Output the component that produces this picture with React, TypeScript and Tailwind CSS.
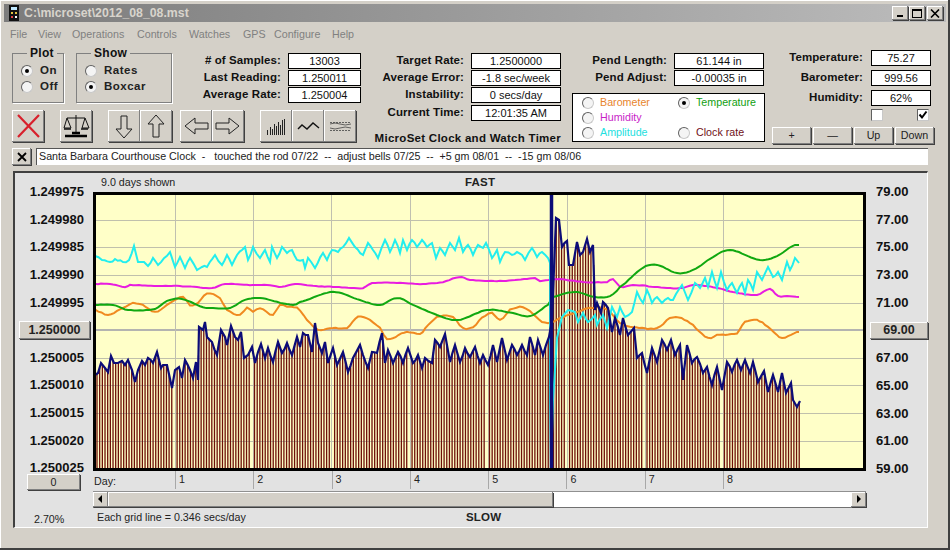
import React from "react";

const raised = "bg-[#d4d0c8] shadow-[inset_-1px_-1px_#808080,inset_1px_1px_#ffffff,1px_1px_#404040]";
const field = "bg-white border border-black text-center text-[11px] leading-[14px] text-[#111]";
const label = "font-bold text-[11.5px] tracking-[0.1px] text-[#111] leading-[15px]";
const plain = "text-[10.7px] text-[#222]";

const navy = "95,375 98,373 101,363 105,368 108,372 111,356 114,363 118,363 122,361 125,365 128,360 132,370 135,382 138,370 142,361 145,365 148,358 153,363 157,352 161,368 163,365 167,365 172,388 175,370 179,367 182,378 185,360 190,370 193,378 196,362 198,380 199,327 203,330 205,322 207,337 212,342 217,355 221,330 225,337 227,345 231,326 235,337 238,340 241,332 244,358 248,355 252,347 255,363 258,352 261,344 265,358 268,348 273,362 278,342 282,353 287,343 292,355 297,337 300,347 303,333 308,335 312,352 315,323 318,343 322,353 325,342 328,363 333,348 337,365 343,352 348,372 353,358 360,345 363,355 368,368 372,352 377,353 382,333 385,363 388,350 393,363 398,352 403,363 408,348 413,363 418,355 422,368 425,358 432,363 435,340 440,347 445,334 450,362 455,345 460,362 465,348 470,357 475,347 480,363 483,355 488,365 493,345 497,362 502,338 507,360 512,345 517,355 522,345 527,355 530,337 535,355 538,340 543,355 549,337 552,320 556,218 559,220 562,247 567,241 569,265 573,265 577,242 580,255 583,252 587,239 590,252 593,245 595,310 597,303 601,313 603,302 608,308 612,332 615,318 620,335 623,318 628,335 634,328 637,358 642,353 647,373 652,348 657,362 662,340 667,350 671,340 675,355 680,345 683,380 687,345 692,363 697,357 703,373 707,367 712,385 717,367 722,390 727,362 732,372 737,360 741,370 745,360 750,373 753,362 758,382 764,371 768,392 773,375 778,392 782,373 786,393 791,383 793,400 797,407 800,401";
const cyan = "95,256 102,260 110,262 115,259 123,262 129,260 134,246 138,262 144,262 148,266 153,258 158,265 170,252 175,267 180,257 185,268 190,258 197,270 202,267 207,267 215,255 222,265 227,255 232,265 237,255 245,247 248,260 253,247 260,258 265,250 270,262 272,247 277,258 282,247 287,253 292,250 297,260 303,260 305,268 308,258 315,268 323,253 327,260 332,250 338,252 343,247 349,238 355,247 363,255 368,243 378,258 385,240 390,252 395,240 400,253 403,240 407,250 412,240 417,247 422,240 427,247 432,243 436,258 440,248 445,255 450,243 455,250 459,238 463,252 468,245 473,255 478,245 483,248 486,243 492,258 497,250 500,262 505,252 512,255 517,252 522,255 525,260 532,248 537,257 542,252 548,258 550,263 550,400 551,469 553,400 557,338 562,317 568,310 575,312 578,322 583,313 588,322 595,315 597,325 603,315 607,328 612,307 617,317 620,307 625,317 632,312 637,292 643,303 647,290 652,303 657,297 662,303 668,298 673,300 682,285 688,300 695,283 700,288 705,278 708,287 712,272 717,288 721,272 727,290 732,283 737,293 742,283 745,293 748,280 753,290 757,272 762,280 768,267 773,277 778,272 782,280 787,262 790,270 795,258 799,263";
const magenta = "95,284 110,284 125,287 130,285 157,286 177,286 197,287 212,288 225,284 247,285 267,285 282,287 295,284 313,286 333,287 363,288 372,283 400,283 423,284 443,282 459,277 470,280 500,281 527,279 535,278 540,281 557,279 583,282 607,282 613,279 620,287 633,285 667,288 683,288 693,285 713,287 733,292 757,295 770,289 778,296 787,296 799,297";
const green = "95,305 113,305 128,310 155,309 167,301 182,299 203,307 213,308 230,308 245,300 260,298 277,302 293,305 300,302 333,292 360,300 380,305 397,298 413,305 437,315 458,320 487,310 513,313 530,316 548,305 553,297 575,292 595,297 610,296 620,287 643,268 657,265 677,273 693,270 713,257 730,250 760,260 777,256 795,245 799,245";
const orange = "95,310 108,315 123,308 133,303 143,305 155,312 167,305 183,297 190,305 198,303 207,293 220,298 227,310 240,315 247,308 253,312 260,308 273,315 280,305 287,307 297,308 307,320 318,330 333,328 347,328 358,317 370,320 380,328 387,339 407,332 420,334 428,325 437,317 453,317 463,328 473,327 482,318 492,313 500,320 510,310 523,307 533,314 545,323 560,318 590,308 608,310 620,323 633,327 657,328 673,317 690,323 708,338 717,335 737,333 745,322 757,320 768,327 782,338 797,332 799,332";

const parse = (s: string) => s.split(" ").map((p) => p.split(",").map(Number));
const noise = (i: number) => {
  const v = Math.sin(i * 12.9898) * 43758.5453;
  return (v - Math.floor(v)) * 2 - 1;
};

// Catmull-Rom resampling with a little per-sample wobble, for the slow curves
function smooth(s: string, wobble: number) {
  const p = parse(s);
  const out: string[] = [];
  let n = 0;
  for (let i = 0; i < p.length - 1; i++) {
    const a = p[Math.max(i - 1, 0)];
    const b = p[i];
    const c = p[i + 1];
    const d = p[Math.min(i + 2, p.length - 1)];
    const steps = Math.max(1, Math.round((c[0] - b[0]) / 3));
    for (let k = 0; k < steps; k++) {
      const t = k / steps;
      const y =
        0.5 *
        (2 * b[1] + (c[1] - a[1]) * t + (2 * a[1] - 5 * b[1] + 4 * c[1] - d[1]) * t * t + (3 * b[1] - a[1] - 3 * c[1] + d[1]) * t * t * t);
      const x = b[0] + (c[0] - b[0]) * t;
      out.push(`${x.toFixed(1)},${(y + noise(n++) * wobble).toFixed(1)}`);
    }
  }
  out.push(p[p.length - 1].join(","));
  return out.join(" ");
}

// Straight resampling with wobble, for the jagged curves
function jag(s: string, wobble: number) {
  const p = parse(s);
  const out: string[] = [];
  let n = 7;
  for (let i = 0; i < p.length - 1; i++) {
    const [x0, y0] = p[i];
    const [x1, y1] = p[i + 1];
    const steps = Math.max(1, Math.floor((x1 - x0) / 2.5));
    const steep = Math.abs(y1 - y0) > 4 * Math.max(1, x1 - x0);
    for (let k = 0; k < steps; k++) {
      const t = k / steps;
      const w = steep || k === 0 ? 0 : noise(n++) * wobble;
      out.push(`${(x0 + (x1 - x0) * t).toFixed(1)},${(y0 + (y1 - y0) * t + w).toFixed(1)}`);
    }
  }
  out.push(p[p.length - 1].join(","));
  return out.join(" ");
}

const pts = parse(navy);
function yAt(x: number) {
  for (let i = 1; i < pts.length; i++) {
    if (x <= pts[i][0]) {
      const [a, b] = pts[i - 1];
      const [c, d] = pts[i];
      return b + ((d - b) * (x - a)) / (c - a);
    }
  }
  return 400;
}
const vGrid = [175, 253, 331, 410, 488, 567, 645, 723];
const hGrid = [220, 247, 275, 303, 358, 385, 413, 441];
let barPath = "";
for (let x = 97; x < 800; x += 2.67) {
  if (vGrid.some((g) => Math.abs(g - x) < 1.3)) continue;
  barPath += `M${x.toFixed(2)} ${yAt(x).toFixed(1)}V469`;
}

function Radio({ on = false }: { on?: boolean }) {
  return (
    <span className="w-[12px] h-[12px] shrink-0 rounded-full bg-[#f4f4f4] border border-[#606060] border-b-[#c8c8c8] border-r-[#c8c8c8] flex items-center justify-center">
      {on && <span className="w-[4px] h-[4px] rounded-full bg-black" />}
    </span>
  );
}

function Row({ name, value, w }: { name: string; value: string; w: string }) {
  return (
    <div className="flex justify-end gap-[7px] h-[16px]">
      <span className={label}>{name}</span>
      <div className={`${field} ${w}`}>{value}</div>
    </div>
  );
}

function Tool({ children, cls = "" }: { children: React.ReactNode; cls?: string }) {
  return (
    <div className={`${raised} w-[32px] h-[32px] flex items-center justify-center ${cls}`}>
      <svg width="28" height="28" viewBox="0 0 28 28" fill="none">
        {children}
      </svg>
    </div>
  );
}

function Group({ title, w, items }: { title: string; w: string; items: [string, boolean][] }) {
  return (
    <fieldset className={`${w} h-[57px] border border-[#808080] shadow-[1px_1px_#fff] pl-[8px] pt-[3px]`}>
      <legend className="ml-[6px] px-[3px] font-bold text-[12px] leading-[14px] tracking-[0.3px] text-[#111]">{title}</legend>
      {items.map(([t, on]) => (
        <div key={t} className="flex items-center gap-[7px] h-[16px]">
          <Radio on={on} />
          <span className="font-bold text-[11.5px] tracking-[0.5px] text-[#222]">{t}</span>
        </div>
      ))}
    </fieldset>
  );
}

function Choice({ t, c, on = false }: { t?: string; c?: string; on?: boolean }) {
  if (!t) return <div />;
  return (
    <div className="flex items-center gap-[6px]">
      <Radio on={on} />
      <span className={`text-[10.7px] ${c}`}>{t}</span>
    </div>
  );
}

export default function App() {
  const leftLabels = ["1.249975", "1.249980", "1.249985", "1.249990", "1.249995", "1.250000", "1.250005", "1.250010", "1.250015", "1.250020", "1.250025"];
  const rightLabels = ["79.00", "77.00", "75.00", "73.00", "71.00", "69.00", "67.00", "65.00", "63.00", "61.00", "59.00"];
  return (
    <div className="w-[950px] h-[550px] overflow-hidden bg-[#d4d0c8] border-r-2 border-b-2 border-r-[#404040] border-b-[#404040] pt-[4px] pl-[4px] pr-[2px] font-['Liberation_Sans',Arial,sans-serif] shadow-[inset_1px_1px_#ffffff]">
      <div className="h-[18px] w-[942px] flex items-center bg-gradient-to-r from-[#7c7c7c] to-[#bcbcbc] pl-[2px] pr-[3px]">
        <svg width="16" height="16" viewBox="0 0 16 16" className="shrink-0">
          <rect x="3" y="0" width="10" height="16" fill="#111" />
          <rect x="5" y="2" width="6" height="3" fill="#bfe8ff" />
          <rect x="5" y="7" width="2" height="2" fill="#e0c040" />
          <rect x="9" y="7" width="2" height="2" fill="#e0c040" />
          <rect x="5" y="11" width="2" height="2" fill="#e04040" />
          <rect x="9" y="11" width="2" height="2" fill="#fff" />
        </svg>
        <span className="ml-[2px] font-bold text-[12.3px] text-[#d8d4cc]">C:\microset\2012_08_08.mst</span>
        <div className="ml-auto flex gap-[1px]">
          <div className={`${raised} w-[16px] h-[14px] flex items-end justify-center pb-[3px]`}><span className="block w-[6px] h-[2px] bg-black" /></div>
          <div className={`${raised} w-[16px] h-[14px] flex items-center justify-center`}><span className="block w-[10px] h-[9px] border border-black border-t-2" /></div>
          <div className={`${raised} w-[16px] ml-[1px] h-[14px] flex items-center justify-center`}>
            <svg width="10" height="9" viewBox="0 0 10 9"><path d="M1 0.5 L9 8.5 M9 0.5 L1 8.5" stroke="#000" strokeWidth="1.6" /></svg>
          </div>
        </div>
      </div>

      <div className="h-[24px] flex items-center text-[10.7px] text-[#808080]">
        <span className="ml-[6px] w-[28px]">File</span>
        <span className="w-[34px]">View</span>
        <span className="w-[65px]">Operations</span>
        <span className="w-[52px]">Controls</span>
        <span className="w-[54px]">Watches</span>
        <span className="w-[31px]">GPS</span>
        <span className="w-[58px]">Configure</span>
        <span>Help</span>
      </div>

      <div className="flex h-[100px] pl-[8px]">
        <div className="w-[349px] shrink-0">
          <div className="flex h-[57px]">
            <Group title="Plot" w="w-[52px]" items={[["On", true], ["Off", false]]} />
            <div className="w-[12px]" />
            <Group title="Show" w="w-[96px]" items={[["Rates", false], ["Boxcar", true]]} />
            <div className="flex-1 pt-[7px] flex flex-col gap-[1px]">
              <Row name="# of Samples:" value="13003" w="w-[73px]" />
              <Row name="Last Reading:" value="1.250011" w="w-[73px]" />
              <Row name="Average Rate:" value="1.250004" w="w-[73px]" />
            </div>
          </div>
          <div className="flex mt-[7px]">
            <Tool>
              <path d="M4 3 L25 25 M25 3 L4 25" stroke="#d8202c" strokeWidth="2.2" />
            </Tool>
            <Tool cls="ml-[16px]">
              <path d="M14 3 V21 M5 6 H23 M5 6 L2 16 H9 Z M23 6 L20 16 H27 Z" stroke="#111" strokeWidth="1" />
              <path d="M2 17 H9 M19 17 H26" stroke="#111" strokeWidth="1.5" />
              <path d="M10 21 H18 M3 24 H25" stroke="#000" strokeWidth="2.5" />
            </Tool>
            <Tool cls="ml-[16px]">
              <path d="M11 4 H17 V17 H22 L14 26 L6 17 H11 Z" stroke="#222" strokeWidth="1" />
            </Tool>
            <Tool>
              <path d="M11 25 H17 V12 H22 L14 3 L6 12 H11 Z" stroke="#222" strokeWidth="1" />
            </Tool>
            <Tool cls="ml-[8px]">
              <path d="M26 11 H13 V6 L3 14 L13 22 V17 H26 Z" stroke="#222" strokeWidth="1" />
            </Tool>
            <Tool>
              <path d="M2 11 H15 V6 L25 14 L15 22 V17 H2 Z" stroke="#222" strokeWidth="1" />
            </Tool>
            <Tool cls="ml-[16px]">
              <path d="M5.5 18V23M8.5 15V23M10.5 17V23M12.5 12V23M14.5 14V23M16.5 10V23M18.5 13V23M20.5 8V23M22.5 7V23" stroke="#222" strokeWidth="1" />
            </Tool>
            <Tool>
              <path d="M4 17 L8 13 L13 17 L19 11 L25 16" stroke="#111" strokeWidth="1.4" />
            </Tool>
            <Tool>
              <path d="M4 10.5 H25 M4 18.5 H25" stroke="#444" strokeWidth="0.8" strokeDasharray="2 1" />
              <path d="M4 12 Q9 10 14 12 T25 12 M4 16 Q9 18 14 16 T25 16" stroke="#444" strokeWidth="0.8" />
            </Tool>
          </div>
        </div>

        <div className="w-[200px] shrink-0 pt-[7px] flex flex-col gap-[1px]">
          <Row name="Target Rate:" value="1.2500000" w="w-[90px]" />
          <Row name="Average Error:" value="-1.8 sec/week" w="w-[90px]" />
          <Row name="Instability:" value="0 secs/day" w="w-[90px]" />
          <div className="mt-[1px]">
            <Row name="Current Time:" value="12:01:35 AM" w="w-[90px]" />
          </div>
          <div className="font-bold text-[11.5px] tracking-[0.27px] text-[#111] leading-[16px] mt-[8px] text-right whitespace-nowrap">MicroSet Clock and Watch Timer</div>
        </div>

        <div className="w-[193px] shrink-0 ml-[11px] pt-[7px]">
          <div className="flex flex-col gap-[1px] pr-[1px]">
            <Row name="Pend Length:" value="61.144 in" w="w-[90px]" />
            <Row name="Pend Adjust:" value="-0.00035 in" w="w-[90px]" />
          </div>
          <div className="mt-[7px] h-[49px] border border-black bg-white grid grid-cols-[96px_1fr] grid-rows-3 pl-[9px] py-[1px] items-center">
            <Choice t="Barometer" c="text-[#e8842c]" />
            <Choice t="Temperature" c="text-[#10a010]" on />
            <Choice t="Humidity" c="text-[#c81ec8]" />
            <Choice />
            <Choice t="Amplitude" c="text-[#22e0e0]" />
            <Choice t="Clock rate" c="text-[#701018]" />
          </div>
        </div>

        <div className="w-[163px] shrink-0 ml-[7px] pt-[4px]">
          <div className="flex flex-col gap-[4px] pr-[4px]">
            {[["Temperature:", "75.27"], ["Barometer:", "999.56"], ["Humidity:", "62%"]].map(([a, b]) => (
              <div key={a} className="flex justify-end gap-[8px] h-[16px]">
                <span className={label}>{a}</span>
                <div className={`${field} w-[60px]`}>{b}</div>
              </div>
            ))}
          </div>
          <div className="flex mt-[3px] ml-[99px] w-[58px] justify-between">
            <span className="w-[12px] h-[12px] bg-white border border-[#606060] border-b-[#c8c8c8] border-r-[#c8c8c8]" />
            <span className="w-[12px] h-[12px] bg-white border border-[#606060] border-b-[#c8c8c8] border-r-[#c8c8c8] flex items-center justify-center">
              <svg width="10" height="10" viewBox="0 0 10 10"><path d="M1.5 4.5 L4 7.5 L8.5 1.5" stroke="#000" strokeWidth="2" fill="none" /></svg>
            </span>
          </div>
          <div className="flex mt-[6px] gap-[2px] w-[163px]">
            {["+", "—", "Up", "Down"].map((t) => (
              <div key={t} className={`${raised} w-[39px] h-[17px] flex items-center justify-center text-[10.7px] text-[#222]`}>{t}</div>
            ))}
          </div>
        </div>
      </div>

      <div className="flex ml-[8px] mt-[2px] h-[17px]">
        <div className={`${raised} w-[19px] h-[17px] flex items-center justify-center`}>
          <svg width="10" height="10" viewBox="0 0 10 10"><path d="M1 1 L9 9 M9 1 L1 9" stroke="#000" strokeWidth="1.8" /></svg>
        </div>
        <div className="ml-[5px] w-[892px] bg-white border-l border-t border-l-[#555] border-t-[#555] pl-[2px] text-[10.7px] leading-[15px] text-[#222] whitespace-pre">
          {"Santa Barbara Courthouse Clock  -   touched the rod 07/22  --  adjust bells 07/25  --  +5 gm 08/01  --  -15 gm 08/06"}
        </div>
      </div>

      <div className="flex ml-[9px] mt-[6px] w-[915px] h-[357px] bg-[#e2e2e2] border-l-2 border-t-2 border-l-[#404040] border-t-[#404040] border-r border-b border-r-white border-b-white">
        <div className="w-[78px] shrink-0 pt-[5px] flex flex-col">
          {leftLabels.map((t) =>
            t === "1.250000" ? (
              <div key={t} className="h-[27.7px] flex items-center pl-[4px]">
                <div className={`${raised} w-[71px] h-[18px] flex items-center justify-center font-bold text-[12.5px] text-[#222]`}>{t}</div>
              </div>
            ) : (
              <div key={t} className="h-[27.7px] flex items-center justify-end pr-[9px] font-bold text-[13px] text-[#111]">{t}</div>
            )
          )}
          <div className={`${raised} ml-[12px] -mt-[8px] w-[53px] h-[16px] flex items-center justify-center ${plain}`}>0</div>
          <div className={`mt-[21px] ml-[19px] ${plain}`}>2.70%</div>
        </div>

        <div className="w-[773px] shrink-0 flex flex-col">
          <div className="h-[19px] flex items-center relative">
            <span className={`ml-[8px] ${plain}`}>9.0 days shown</span>
            <span className="absolute left-[372px] font-bold text-[11.5px] tracking-[0.2px] text-[#222]">FAST</span>
          </div>
          <div className="h-[279px] border-[3px] border-black bg-[#ffffc8]">
            <svg width="767" height="273" viewBox="96 195 767 273" className="block">
              {hGrid.map((y) => (
                <line key={y} x1="96" x2="863" y1={y + 0.5} y2={y + 0.5} stroke="#c0c0ac" strokeWidth="1" />
              ))}
              <line x1="96" x2="863" y1="330" y2="330" stroke="#b4b4b0" strokeWidth="2" />
              {vGrid.map((x) => (
                <line key={x} y1="195" y2="469" x1={x + 0.5} x2={x + 0.5} stroke="#c0c0b0" strokeWidth="1" />
              ))}
              <path d={barPath} stroke="#6e1008" strokeWidth="1.3" fill="none" />
              <polyline points={smooth(orange, 0.5)} fill="none" stroke="#f08a20" strokeWidth="2" />
              <polyline points={smooth(magenta, 0.25)} fill="none" stroke="#e81ce0" strokeWidth="2" />
              <polyline points={smooth(green, 0.2)} fill="none" stroke="#10a810" strokeWidth="2" />
              <polyline points={jag(cyan, 1.2)} fill="none" stroke="#22eeee" strokeWidth="2" />
              <line x1="551.5" x2="551.5" y1="195" y2="469" stroke="#0c0c78" strokeWidth="3.5" />
              <polyline points={jag(navy, 1.2)} fill="none" stroke="#0c0c78" strokeWidth="2.2" />
            </svg>
          </div>
          <div className="h-[21px] flex">
            <span className={`w-[82px] pl-[1px] pt-[2px] ${plain}`}>Day:</span>
            {[1, 2, 3, 4, 5, 6, 7, 8].map((d) => (
              <div key={d} className={`w-[78.3px] h-[18px] border-l border-l-[#a8a8a8] pl-[3px] pt-[1px] leading-[15px] ${plain}`}>{d}</div>
            ))}
          </div>
          <div className="h-[17px] w-[773px] flex border-t border-t-[#909090] border-b border-b-[#707070] bg-white">
            <div className={`${raised} w-[15px] h-full flex items-center justify-center`}>
              <svg width="5" height="8" viewBox="0 0 5 8"><path d="M4 0 V8 L0 4 Z" fill="#000" /></svg>
            </div>
            <div className={`${raised} w-[445px] h-full`} />
            <div className="flex-1" />
            <div className={`${raised} w-[15px] h-full flex items-center justify-center`}>
              <svg width="5" height="8" viewBox="0 0 5 8"><path d="M1 0 V8 L5 4 Z" fill="#000" /></svg>
            </div>
          </div>
          <div className="flex items-center h-[20px] relative">
            <span className={`ml-[4px] ${plain}`}>Each grid line = 0.346 secs/day</span>
            <span className="absolute left-[373px] font-bold text-[11.5px] tracking-[0.2px] text-[#222]">SLOW</span>
          </div>
        </div>

        <div className="flex-1 pt-[5px] flex flex-col">
          {rightLabels.map((t) =>
            t === "69.00" ? (
              <div key={t} className="h-[27.7px] flex items-center pl-[4px]">
                <div className={`${raised} w-[58px] h-[17px] flex items-center justify-center font-bold text-[12.5px] text-[#222]`}>{t}</div>
              </div>
            ) : (
              <div key={t} className="h-[27.7px] flex items-center pl-[10px] font-bold text-[13px] text-[#111]">{t}</div>
            )
          )}
        </div>
      </div>
    </div>
  );
}
